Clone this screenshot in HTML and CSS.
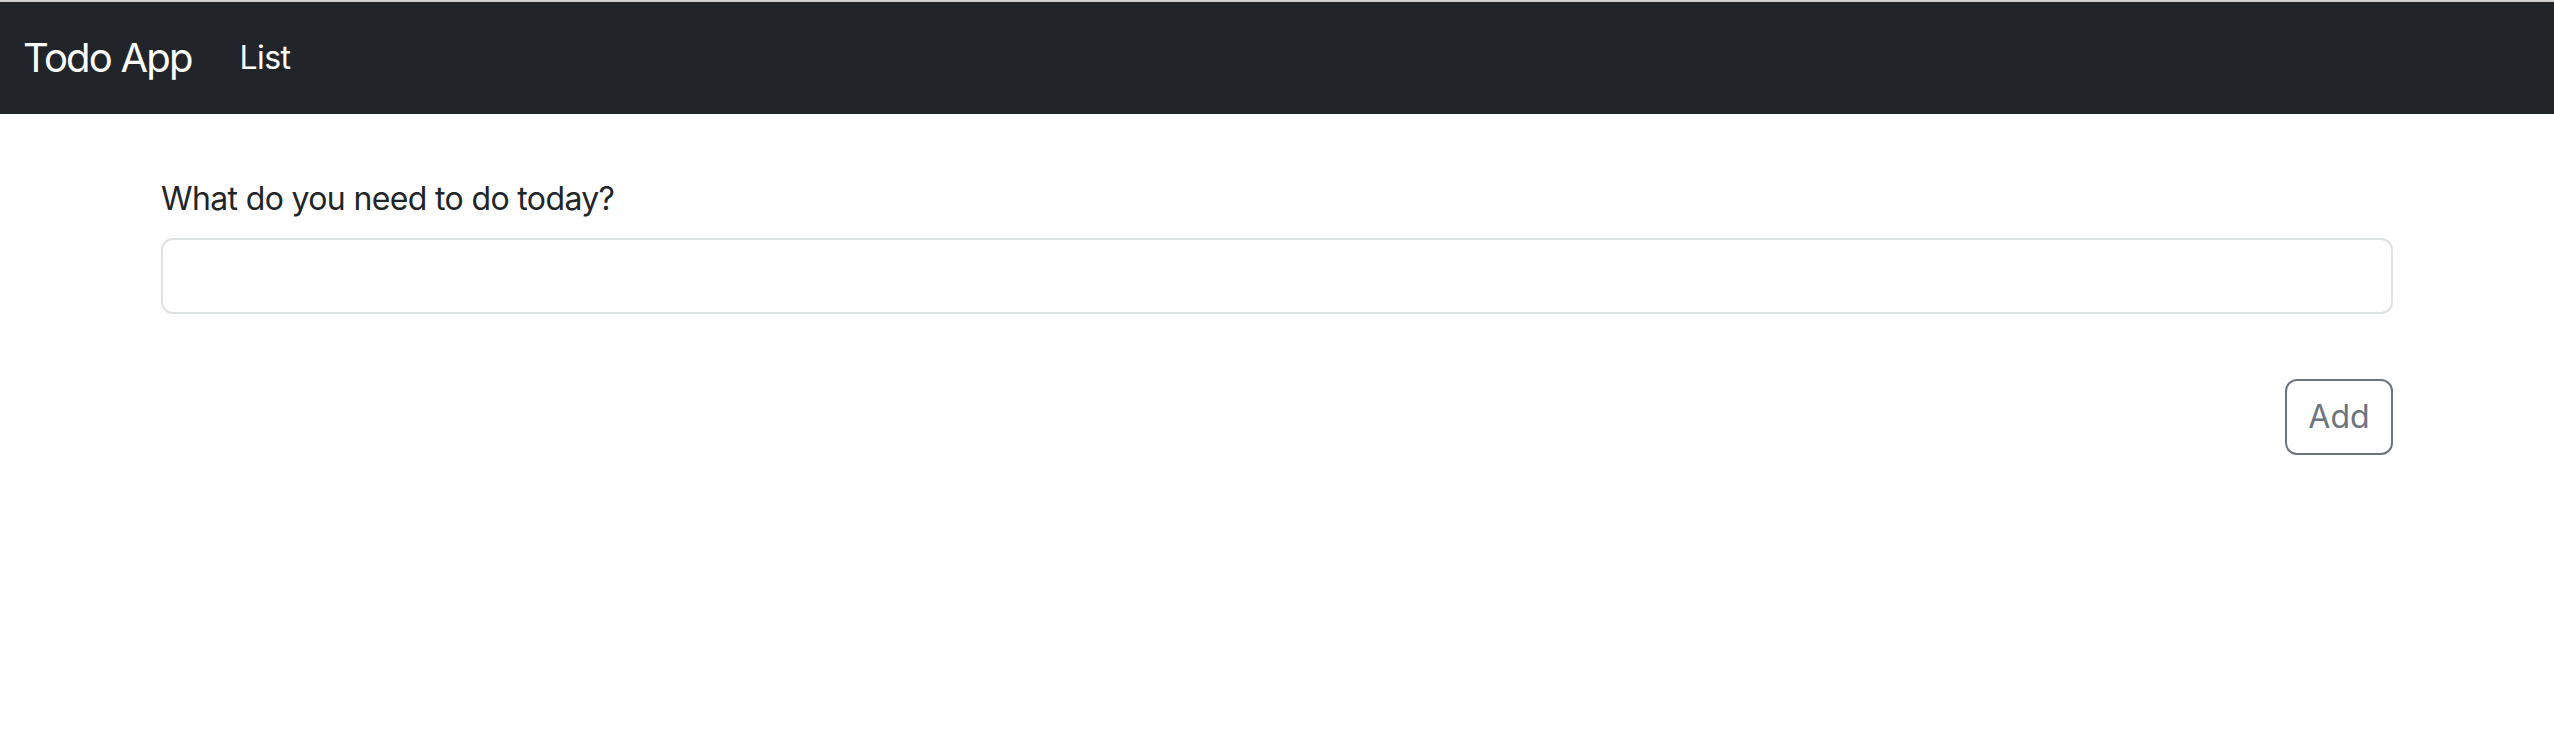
FILE: index.html
```html
<!DOCTYPE html>
<html lang="en">
<head>
<meta charset="utf-8">
<title>Todo App</title>
<link rel="stylesheet" href="styles.css">
</head>
<body>
<nav class="navbar">
  <div class="navbar-inner">
    <a class="brand" href="#">Todo App</a>
    <a class="nav-link" href="#">List</a>
  </div>
</nav>
<main class="container">
  <form class="todo-form">
    <label class="form-label" for="todo">What do you need to do today?</label>
    <input class="form-control" id="todo" type="text">
    <div class="actions">
      <button class="btn-outline" type="button">Add</button>
    </div>
  </form>
</main>
</body>
</html>
```

FILE: styles.css
```css
* { box-sizing: border-box; }
html, body { margin: 0; padding: 0; }
body {
  font-family: Inter, "Noto Sans", "Liberation Sans", sans-serif;
  font-size: 32px;
  line-height: 1.5;
  letter-spacing: -0.02em;
  color: #212529;
  background: #fff;
  border-top: 2px solid #cfcfcf;
}
.navbar {
  background: #212529;
  padding: 16px 0;
}
.navbar-inner {
  display: flex;
  align-items: center;
  padding: 0 23px;
}
.brand {
  color: #fff;
  text-decoration: none;
  font-size: 40px;
  line-height: 60px;
  letter-spacing: -0.045em;
  padding: 10px 0;
  margin-right: 32px;
}
.nav-link {
  color: #fff;
  text-decoration: none;
  font-size: 32px;
  line-height: 48px;
  padding: 16px;
}
.container {
  width: 2280px;
  margin: 0 auto;
  padding: 61px 24px 0;
}
.todo-form {
  display: flex;
  flex-direction: column;
}
.form-label {
  display: block;
  line-height: 48px;
  margin-bottom: 15px;
}
.form-control {
  display: block;
  width: 100%;
  height: 76px;
  font: inherit;
  padding: 12px 24px;
  border: 2px solid #dee2e6;
  border-radius: 12px;
  background: #fff;
  outline: none;
}
.actions {
  display: flex;
  justify-content: flex-end;
  margin-top: 65px;
}
.btn-outline {
  font: inherit;
  color: #6c757d;
  background: transparent;
  border: 2px solid #6c757d;
  border-radius: 12px;
  height: 76px;
  width: 108px;
  padding: 0;
  line-height: 1;
  cursor: pointer;
}
```
